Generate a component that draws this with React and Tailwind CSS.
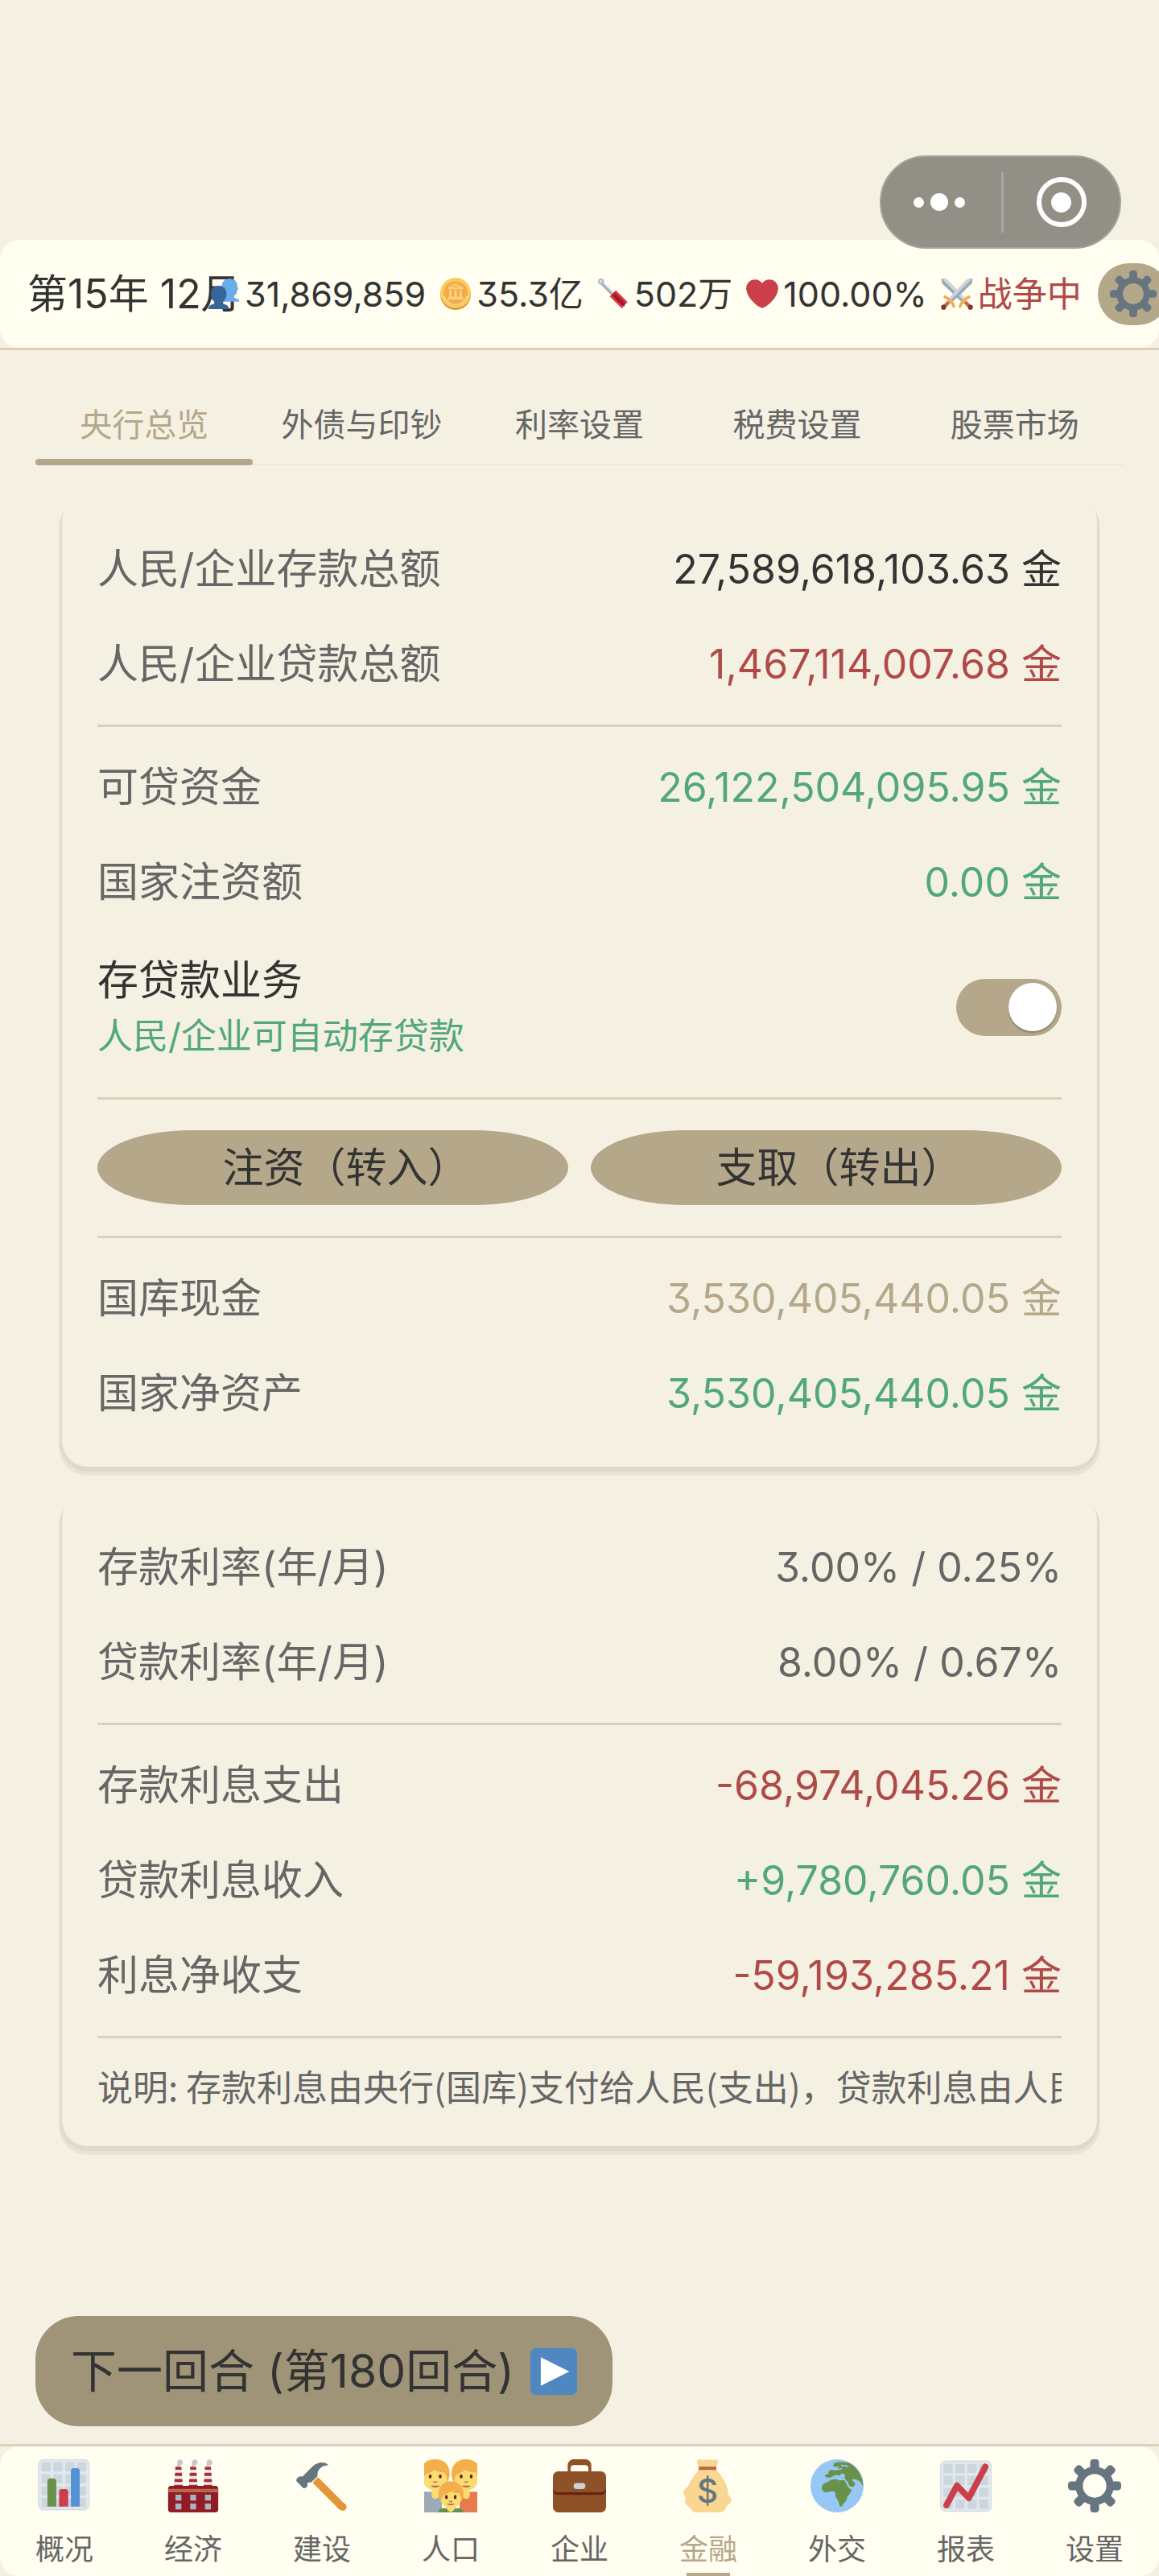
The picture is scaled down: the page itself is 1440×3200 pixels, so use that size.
import { useState } from "react";

function Icon({ className = "size-[66px]", children }) {
  return (
    <svg viewBox="0 0 36 36" className={`block shrink-0 ${className}`} aria-hidden="true">
      {children}
    </svg>
  );
}

const small = "size-[40px]";

function GearIcon({ className }) {
  return (
    <Icon className={className}>
      <path
        fill="#66757f"
        d="M34 15h-3.362c-.324-1.369-.864-2.651-1.582-3.814l2.379-2.379c.781-.781.781-2.048 0-2.829l-1.414-1.414c-.781-.781-2.047-.781-2.828 0l-2.379 2.379C23.65 6.225 22.369 5.686 21 5.362V2c0-1.104-.896-2-2-2h-2c-1.104 0-2 .896-2 2v3.362c-1.369.324-2.651.864-3.814 1.582L8.808 4.565c-.781-.781-2.048-.781-2.828 0L4.565 5.979c-.781.781-.781 2.048-.001 2.829l2.379 2.379C6.225 12.35 5.686 13.632 5.362 15H2c-1.104 0-2 .896-2 2v2c0 1.104.896 2 2 2h3.362c.324 1.368.864 2.65 1.582 3.813l-2.379 2.379c-.78.78-.78 2.048.001 2.829l1.414 1.414c.78.78 2.047.78 2.828 0l2.379-2.379c1.163.719 2.445 1.258 3.814 1.582V34c0 1.104.896 2 2 2h2c1.104 0 2-.896 2-2v-3.362c1.368-.324 2.65-.864 3.813-1.582l2.379 2.379c.781.781 2.047.781 2.828 0l1.414-1.414c.781-.781.781-2.048 0-2.829l-2.379-2.379c.719-1.163 1.258-2.445 1.582-3.814H34c1.104 0 2-.896 2-2v-2C36 15.896 35.104 15 34 15zM18 26c-4.418 0-8-3.582-8-8s3.582-8 8-8 8 3.582 8 8-3.582 8-8 8z"
      />
    </Icon>
  );
}

function PeopleIcon() {
  return (
    <Icon className={small}>
      <path
        fill="#6aabe9"
        d="M24.5 .8c5 0 8.6 3.4 8.6 7.6 0 1.300 .2 2.200 .9 4 .3 .9-.8 1.100-1 1.500-.2 2.400-1 5.300-3.600 6.100-.5 2 .2 2.600 2.300 3.100 2.100 .4 3.600 1.400 3.800 3.700H17L16 8.500C16 4 19.700 .8 24.500 .8z"
      />
      <path
        fill="#37669b"
        d="M12.300 9c5 0 8.800 3.400 8.800 9 0 3.900-1.600 7-3.700 8.800-.6 2.200 .2 2.800 2.200 3.100 2.500 .5 4 2.200 4 5.100H.8c0-2.900 1.600-4.600 4.100-5.100 2-.3 3-.9 2.400-3.100C5.200 25 3.500 21.900 3.500 18c0-5.600 3.800-9 8.800-9z"
      />
    </Icon>
  );
}

function CoinIcon() {
  return (
    <Icon className={small}>
      <ellipse cx="18" cy="19" rx="17" ry="17" fill="#dc8d33" />
      <ellipse cx="18" cy="17" rx="17" ry="17" fill="#f9cd62" />
      <circle cx="18" cy="17.500" r="13.600" fill="#f4ab4b" />
      <path d="M5 20a13.400 13.400 0 0 0 26 0" fill="none" stroke="#f9d985" strokeWidth="1.400" />
      <path
        fill="#fbd180"
        d="M18 6.800l8.500 4.200v1.800h-17V11zM11 13.800h2.600v7.400H11zm5.700 0h2.600v7.400h-2.600zm5.700 0H25v7.400h-2.600zM10 21.200h16v1.500H10zM9 22.700h18v1.800H9z"
      />
      <path fill="#f4ab4b" d="M18 8.500l4.500 2.200h-9z" />
    </Icon>
  );
}

function ScrewdriverIcon() {
  return (
    <Icon className={small}>
      <path d="M3 4l14 14" stroke="#9aaab4" strokeWidth="3.600" />
      <path d="M4 3.500l14 14" stroke="#ccd6dd" strokeWidth="1.500" />
      <circle cx="4.200" cy="4.200" r="3.200" fill="#a9b8c2" />
      <circle cx="4" cy="4" r="1.500" fill="#e1e8ed" />
      <path d="M17.500 17.500l13 13" stroke="#b81e2c" strokeWidth="9.500" strokeLinejoin="round" />
      <path d="M15 20l13.500 13.500M20 15l13 13" stroke="#d8404c" strokeWidth="2" />
      <path d="M18.500 19.500l12 12" stroke="#8c101c" strokeWidth="1.200" />
    </Icon>
  );
}

function HeartIcon() {
  return (
    <Icon className={small}>
      <path
        fill="#ca3f49"
        d="M35.885 11.833c0-5.450-4.418-9.868-9.867-9.868-3.308 0-6.227 1.633-8.018 4.129-1.791-2.496-4.710-4.129-8.017-4.129-5.450 0-9.868 4.417-9.868 9.868 0 .772 .098 1.520 .266 2.241C1.751 22.587 11.216 31.568 18 34.034c6.783-2.466 16.249-11.447 17.617-19.959 .170-.721 .268-1.469 .268-2.242z"
      />
    </Icon>
  );
}

function SwordsIcon() {
  return (
    <Icon className={small}>
      <path fill="#9aaab4" d="M.5 1l6 .5 20 21-4 4L1.500 6.500z" />
      <path fill="#ccd6dd" d="M6.500 1.500l20 21-2 2L2 2z" />
      <path fill="#9aaab4" d="M35.500 1l-6 .5-20 21 4 4 21-20z" />
      <path fill="#ccd6dd" d="M29.500 1.500l-20 21 2 2L34 2z" />
      <path d="M9 27l-5 5M27 27l5 5" stroke="#bf6952" strokeWidth="4" />
      <path d="M4.500 21.500l3 1.500 5.500 5.500 1.500 3.500M31.500 21.500l-3 1.500-5.500 5.500-1.500 3.500" fill="none" stroke="#f4ab4b" strokeWidth="3.200" strokeLinecap="round" strokeLinejoin="round" />
      <circle cx="3" cy="33" r="2.800" fill="#7a3b22" />
      <circle cx="33" cy="33" r="2.800" fill="#7a3b22" />
    </Icon>
  );
}

function PlayIcon() {
  return (
    <Icon className="size-[58px]">
      <rect width="36" height="36" rx="4" fill="#4f87c0" />
      <path fill="#fff" d="M8 7l22 11L8 29z" />
    </Icon>
  );
}

const gridPos = [0, 8.1, 16.2, 24.2];

function ChartGrid({ x, y }) {
  return (
    <>
      <rect x={x} y={y} width="34.400" height="34.200" rx="3.500" fill="#e1e8ed" stroke="#b9c0c4" strokeWidth=".3" />
      {gridPos.map((gx) =>
        gridPos.map((gy) => (
          <rect key={`${gx}-${gy}`} x={x + 2 + gx} y={y + 2 + gy} width="6.200" height="6.200" rx=".6" fill="#ccd6dd" />
        ))
      )}
    </>
  );
}

function BarChartIcon() {
  return (
    <Icon>
      <ChartGrid x={0.4} y={0.1} />
      <path fill="#68924a" d="M6.500 32V15a2 2 0 0 1 2-2h2a2 2 0 0 1 2 2v17z" />
      <path fill="#ca3f49" d="M14.400 32V22.200a2 2 0 0 1 2-2h2.200a2 2 0 0 1 2 2V32z" />
      <path fill="#5591d4" d="M22.400 32V8a2 2 0 0 1 2-2h2a2 2 0 0 1 2 2v24z" />
    </Icon>
  );
}

function FactoryIcon() {
  return (
    <Icon>
      {[8, 18, 28].map((cx) => (
        <g key={cx} transform={`translate(${cx - 8} 0)`}>
          <path fill="#f2e9ea" d="M6 5h4l1 13.500H5z" />
          <path fill="#a52f3a" d="M6 5h4l.15 2.100h-4.300zM5.700 9.200h4.600l.16 2.100H5.540zM5.400 13.300h5.200l.16 2.100H5.240zM5.100 17.300h5.800l.1 1.200H5z" />
          <path fill="#c4c9cc" d="M7.200 5V2.600a2 2 0 1 1 1.700 1.500L8.600 5z" />
        </g>
      ))}
      <rect x="1" y="18" width="34" height="18" rx="2" fill="#921c26" />
      <path fill="#ba6651" d="M1 20.100h34v2.200H1z" />
      {[6, 16, 26].map((x) => (
        <g key={x} fill="#aab3c0">
          <rect x={x} y="24" width="4" height="4" />
          <rect x={x} y="30" width="4" height="4" />
        </g>
      ))}
    </Icon>
  );
}

function HammerIcon() {
  return (
    <Icon>
      <path d="M13.500 14l18.600 18.600" stroke="#e39537" strokeWidth="5.200" />
      <circle cx="32.100" cy="32.300" r="2.600" fill="#e39537" />
      <path
        fill="#66757f"
        d="M22.400 3.900C21 2.300 18.200 2 16 2.400c-2.300 .4-3.800 1.900-5 3.100l-6.300 6.300c-.9-.3-2-.3-2.700 .3-.8 .7-1.700 1.800-1.300 2.700l4.500 4.600c.8 .8 2.300-.3 2.800-1 .4-.6 .2-1.400 0-2 .8-.9 1.700-1.200 2.500-.6l4.500-4.400c-.5-4.100 2.400-7.300 7.400-7.500z"
      />
    </Icon>
  );
}

function Parent({ x }) {
  return (
    <g transform={`translate(${x} 0)`}>
      <path fill="#f9dc72" d="M-2.400 16h4.800v8.500a2.400 2.400 0 0 1-4.800 0z" />
      <ellipse cx="0" cy="12.500" rx="8.500" ry="8.700" fill="#f9dc72" />
      <path fill="#f4ae4c" d="M-10 10C-10 3 -5.500 0 0 0s9.800 3.500 9.800 9.500c0 3-.9 5.500-2 6.500 .3-3-.3-5.800-1.800-7.300-3 .5-5.500-.7-6.500-1.700C-2.500 9.500-6 9-7.300 11.500c-.7 1.500-.7 3-.5 4.500C-9.300 14.500-10 12.500-10 10z" />
      <ellipse cx="-3.400" cy="11.600" rx=".95" ry="1.400" fill="#662113" />
      <ellipse cx="3.400" cy="11.600" rx=".95" ry="1.400" fill="#662113" />
      <path d="M-1 15.400h2" stroke="#c1694f" strokeWidth=".9" strokeLinecap="round" />
      <path fill="#b9604c" d="M-3 17.900h6c-.6 1.600-5.400 1.600-6 0z" />
    </g>
  );
}

function FamilyIcon() {
  return (
    <Icon>
      <path fill="#9caab8" d="M0 22h12v14H0z" />
      <path fill="#e87b4c" d="M24 22h12v14H24z" />
      <Parent x={7.500} />
      <Parent x={28.500} />
      <path fill="#68924a" d="M9.300 36c.4-2 2-2.900 4-2.900h9.400c2 0 3.600 .9 4 2.900z" />
      <path fill="#f9dc72" d="M14.500 31h7c0 2-1.500 4-3.500 5-2-1-3.500-3-3.500-5z" />
      <ellipse cx="18" cy="25.500" rx="7.400" ry="7.600" fill="#f9dc72" />
      <path fill="#f4ae4c" d="M9.700 23.500c0-5.500 3.800-8.700 8.400-8.700s8.600 3.200 8.600 8.700c0 2.300-.6 4.300-1.700 5.200 .2-2.500-.2-4.500-1.400-5.900-2.500 .4-4.600-.4-5.600-1.300-1 1.700-4 1.600-5.400 3.500-.7 1-.9 2.300-.8 3.700-1.400-.9-2.100-2.900-2.100-5.200z" />
      <ellipse cx="15.100" cy="25.600" rx=".95" ry="1.400" fill="#662113" />
      <ellipse cx="21" cy="25.600" rx=".95" ry="1.400" fill="#662113" />
      <path d="M17.200 28.600h1.600" stroke="#c1694f" strokeWidth=".8" strokeLinecap="round" />
      <path fill="#b9604c" d="M15.500 30.200h5c-.5 1.400-4.500 1.400-5 0z" />
    </Icon>
  );
}

function BriefcaseIcon() {
  return (
    <Icon>
      <path fill="#8f5228" fillRule="evenodd" d="M10 9V4a4 4 0 0 1 4-4h8a4 4 0 0 1 4 4v5zM12 8.200h12V6a2 2 0 0 0-2-2h-8a2 2 0 0 0-2 2z" />
      <rect y="8.200" width="36" height="27.800" rx="3.500" fill="#8f5228" />
      <path fill="#662113" d="M0 20v1c0 1.700 1.500 3.100 3.500 3.100h29c2 0 3.500-1.400 3.500-3.100v-1c-.3 1.500-1.800 2.400-3.500 2.400h-29C1.800 22.400 .3 21.500 0 20z" />
      <rect x="14" y="16.100" width="8" height="4.100" rx="2" fill="#ccd0d9" />
    </Icon>
  );
}

function MoneyBagIcon() {
  return (
    <Icon>
      <path
        fill="#f9d792"
        d="M11.500 5C10.500 3 10 1.500 10.800 .6c.9-.9 2.500-.6 3.400 .1 1-.7 2.200-.7 3.300 0 1.100-.7 2.500-.7 3.500 0 1-.8 2.600-.8 3.300 .2 .6 1-.1 2.400-.8 4.100v2.200c3.200 3.300 6.500 8.700 7.700 13.300 .2 1.400-.2 2.400 .2 3.200 1 1.500 2.400 2.500 2.200 4.300-.3 1.900-2.400 2.600-3.400 4.500-.9 2-2.200 3.500-4.300 3.500H9.200c-1.500 0-2.200-1.500-3.400-2.800C4.200 31.500 2.500 31 2.400 29c-.2-1.700 .5-2.200 .1-3.200-.7-1.400-1.600-2.500-1.200-4 .4-1.600 2.200-2.400 3.100-3.800 1-2.600 4.300-7.500 7.100-10.800z"
      />
      <path fill="#b5674c" d="M11.500 5h12v2.200h-12z" />
      <text x="17.500" y="29.600" textAnchor="middle" fontSize="22" fontWeight="500" fontFamily="Inter, sans-serif" fill="#66757f">
        $
      </text>
    </Icon>
  );
}

function GlobeIcon() {
  return (
    <Icon>
      <circle cx="18" cy="18" r="18" fill="#97c7f5" />
      <path
        fill="#68924a"
        d="M7.700 19c.2-1.800 1.500-2.700 2.900-3.200 1.600-.7 3-2 4.700-2.200 1.900-.2 3.300 .2 4.500 .9 1.200-.3 2.200-.8 3.400-.1 1.200 1 1.800 2.600 2.500 4 .4 1 1 1.600 1.900 2 .5 1.800-1.200 3-2.200 4.300-.6 1.100-.5 2.400-1.300 3.400-.9 1.200-1.900 2.200-2.600 3.400-.5 .8-1.500 .6-1.800-.2-.5-1.300-.5-2.600-1.300-3.700-.8-1.200-1.600-2.200-1.500-3.700 .1-1-.3-1.900-1.200-2.100-1.600-.3-3.100 .6-4.800 .6-2 .1-3.400-1.300-3.200-3.400z"
      />
      <path
        fill="#68924a"
        d="M15.500 4.800c-.3-1.300 .8-2.500 2.200-2.700 2.800-.5 5.400-.2 8.200 .3 5.600 2.700 9.800 8.500 9.700 15.800-.9-.6-1.100-2-1.800-2.800-.6-.9-1.600-.9-2.500-1.500-1-.7-2.300-.7-3.300-.1 .6 .9 1.500 1.500 2.200 2.400 .3 1.300-.9 2-1.900 2.700-.9 .3-1.700-.3-2-1.100-.7-1.500-1.300-3-2.600-4.100-.8-.7-.6-2-.1-2.800-.3-.9-1.600-.7-2.300-1.500-.8 .6-1.200 1.800-2.300 1.600-.9-.4-1.800-.6-2.700-.1-1.400 .7-2.700 1.900-4.400 1.500-1.200-.3-2-.6-2.300-1.300 .6-.8 1.700-1.100 2.700-1.300-.3-1-.1-2 .9-2.400 1.900-.3 3.400-.3 5.100-.9-.1-.8 1-1.300 1.800-1.700-1.600 .2-3.200 .6-4.600 0z"
      />
      <path d="M21 4.200c1.500 .2 3-.2 4.200 .8M16 7c1.500-.3 3.500 0 5-.6M24 15l2 3.600 2.500 .6" fill="none" stroke="#97c7f5" strokeWidth="1" strokeLinecap="round" />
    </Icon>
  );
}

function TrendIcon() {
  return (
    <Icon>
      <ChartGrid x={0.9} y={1.100} />
      <path d="M4.900 31.100l7.100-13.300 8 8.500L31.200 5.100" fill="none" stroke="#ca3f49" strokeWidth="4.200" strokeLinecap="round" strokeLinejoin="round" />
    </Icon>
  );
}

const stats = [
  { label: "人口", text: "31,869,859", Icon: PeopleIcon },
  { label: "国库", text: "35.3亿", Icon: CoinIcon },
  { label: "生产力", text: "502万", Icon: ScrewdriverIcon },
  { label: "民心", text: "100.00%", Icon: HeartIcon },
  { label: "战争", text: "战争中", Icon: SwordsIcon, color: "text-[#b04a48]" },
];

const tabs = ["央行总览", "外债与印钞", "利率设置", "税费设置", "股票市场"];

const navItems = [
  ["概况", BarChartIcon],
  ["经济", FactoryIcon],
  ["建设", HammerIcon],
  ["人口", FamilyIcon],
  ["企业", BriefcaseIcon],
  ["金融", MoneyBagIcon],
  ["外交", GlobeIcon],
  ["报表", TrendIcon],
  ["设置", GearIcon],
];

const tones = {
  dark: "text-[#333333]",
  gray: "text-[#666666]",
  red: "text-[#b04a48]",
  green: "text-[#52a77b]",
  tan: "text-[#b5a78a]",
};

function Row({ label, value, tone }) {
  return (
    <div className="flex h-[118px] items-center justify-between whitespace-nowrap">
      <span className="text-[51px] text-[#666666]">{label}</span>
      <span className={`text-[50px] ${tones[tone]}`}>{value}</span>
    </div>
  );
}

function Divider() {
  return <hr className="my-4 h-[3px] border-0 bg-[#ddd0b8]" />;
}

function Card({ children }) {
  return (
    <section className="rounded-[32px] bg-[#f5f1e2] px-[44px] py-8 shadow-[0_4px_0_2px_#dddacb,0_7px_0_4px_#e8e4d5]">
      {children}
    </section>
  );
}

function ActionButton({ children }) {
  return (
    <button className="h-[93px] flex-1 rounded-[20%/50%] bg-[#b5a78a] pl-8 text-[51px] leading-none text-[#333333]">
      {children}
    </button>
  );
}

export default function App() {
  const [activeTab, setActiveTab] = useState(tabs[0]);
  const [activeNav, setActiveNav] = useState("金融");
  const [lending, setLending] = useState(true);

  return (
    <div className="relative flex min-h-screen flex-col overflow-x-hidden bg-[#f5f1e2] pt-[298px] font-['Inter','Noto_Sans_CJK_SC',sans-serif] text-[#333333] [font-feature-settings:'cv09']">
      <div className="absolute top-[193px] right-[47px] z-10 flex h-[116px] w-[300px] items-center rounded-full border-2 border-[#a5a49b] bg-[#807e77]/85 text-white">
        <button aria-label="更多" className="flex h-full flex-1 items-center justify-center gap-2 pr-1">
          <span className="size-[13px] rounded-full bg-white" />
          <span className="size-[22px] rounded-full bg-white" />
          <span className="size-[13px] rounded-full bg-white" />
        </button>
        <span className="h-[75px] w-[3px] bg-[#a9a8a0]" />
        <button aria-label="关闭" className="flex h-full flex-1 items-center justify-center">
          <span className="flex size-[62px] items-center justify-center rounded-full border-[6px] border-white">
            <span className="size-[25px] rounded-full bg-white" />
          </span>
        </button>
      </div>

      <header className="border-b-[3px] border-[#ddd0b8]">
        <div className="flex h-[134px] items-center overflow-hidden rounded-[24px] bg-[#fffef1] pl-[34px] whitespace-nowrap">
          <h1 className="w-[224px] shrink-0 text-[50px]">第15年 12月</h1>
          <ul className="flex shrink-0 gap-[17px]">
            {stats.map(({ label, text, Icon: StatIcon, color = "" }) => (
              <li key={label} title={label} className={`flex items-center gap-1.5 text-[43px] ${color}`}>
                <StatIcon />
                {text}
              </li>
            ))}
          </ul>
          <button aria-label="设置" className="ml-5 flex h-[77px] w-[88px] shrink-0 items-center justify-center rounded-full bg-[#b5a78a]">
            <GearIcon className="size-[58px]" />
          </button>
        </div>
      </header>

      <nav className="mx-[44px] mt-[45px] flex border-b-2 border-[#ece8d9]" aria-label="金融">
        {tabs.map((tab) => (
          <button
            key={tab}
            onClick={() => setActiveTab(tab)}
            className={`-mb-0.5 flex h-[98px] flex-1 flex-col text-[40px] leading-none whitespace-nowrap ${tab === activeTab ? "text-[#b5a78a]" : "text-[#666666]"}`}
          >
            <span className="flex w-full flex-1 items-center justify-center pt-1.5">{tab}</span>
            <span className={`h-2 w-full rounded-full ${tab === activeTab ? "bg-[#b5a78a]" : ""}`} />
          </button>
        ))}
      </nav>

      <main className="flex flex-col gap-[34px] px-[77px] pt-[38px]">
        <Card>
          <Row label="人民/企业存款总额" value="27,589,618,103.63 金" tone="dark" />
          <Row label="人民/企业贷款总额" value="1,467,114,007.68 金" tone="red" />
          <Divider />
          <Row label="可贷资金" value="26,122,504,095.95 金" tone="green" />
          <Row label="国家注资额" value="0.00 金" tone="green" />
          <label className="flex h-[192px] items-center justify-between">
            <span className="flex flex-col">
              <span className="text-[51px] leading-[72px]">存贷款业务</span>
              <span className="text-[44px] leading-[66px] text-[#52a77b]">人民/企业可自动存贷款</span>
            </span>
            <input
              type="checkbox"
              role="switch"
              checked={lending}
              onChange={() => setLending(!lending)}
              className="flex h-[71px] w-[131px] shrink-0 appearance-none items-center rounded-full bg-[#cfc8b5] px-[6px] before:size-[60px] before:rounded-full before:bg-white before:shadow-[0_2px_2px_rgba(0,0,0,0.25)] checked:justify-end checked:bg-[#b5a78a]"
            />
          </label>
          <Divider />
          <div className="flex gap-7 py-[22px]">
            <ActionButton>注资（转入）</ActionButton>
            <ActionButton>支取（转出）</ActionButton>
          </div>
          <Divider />
          <Row label="国库现金" value="3,530,405,440.05 金" tone="tan" />
          <Row label="国家净资产" value="3,530,405,440.05 金" tone="green" />
        </Card>

        <Card>
          <Row label="存款利率(年/月)" value="3.00% / 0.25%" tone="gray" />
          <Row label="贷款利率(年/月)" value="8.00% / 0.67%" tone="gray" />
          <Divider />
          <Row label="存款利息支出" value="-68,974,045.26 金" tone="red" />
          <Row label="贷款利息收入" value="+9,780,760.05 金" tone="green" />
          <Row label="利息净收支" value="-59,193,285.21 金" tone="red" />
          <Divider />
          <p className="h-[86px] overflow-hidden font-['Noto_Sans_CJK_SC',sans-serif] text-[44px] leading-[86px] whitespace-nowrap text-[#666666]">
            说明: 存款利息由央行(国库)支付给人民(支出)，贷款利息由人民
          </p>
        </Card>
      </main>

      <div className="mt-auto px-[44px] pt-10 pb-[22px]">
        <button className="flex h-[137px] items-center gap-5 rounded-[54px] bg-[#9f9478] px-[44px] text-[57px] leading-none whitespace-nowrap">
          下一回合 (第180回合)
          <PlayIcon />
        </button>
      </div>

      <nav className="border-t-[3px] border-[#ddd0b8]" aria-label="主导航">
        <ul className="flex h-[161px] rounded-[24px] bg-[#fffef1]">
          {navItems.map(([name, NavIcon]) => (
            <li key={name} className="flex-1">
              <button
                onClick={() => setActiveNav(name)}
                className={`flex h-full w-full flex-col items-center pt-4 text-[36px] leading-[52px] ${name === activeNav ? "text-[#b5a78a]" : "text-[#666666]"}`}
              >
                <NavIcon />
                <span className="mt-5">{name}</span>
                <span className={`mt-auto h-1 w-[54px] ${name === activeNav ? "bg-[#b5a78a]" : ""}`} />
              </button>
            </li>
          ))}
        </ul>
      </nav>
    </div>
  );
}
